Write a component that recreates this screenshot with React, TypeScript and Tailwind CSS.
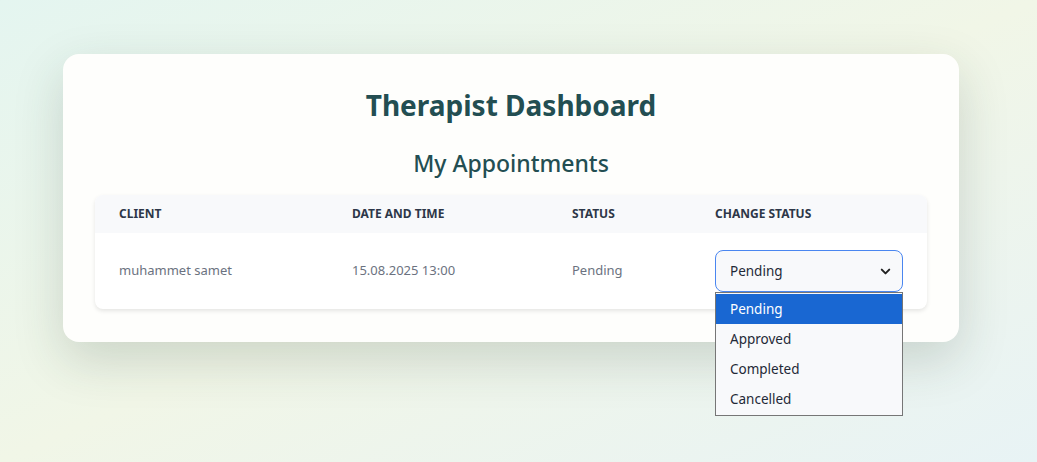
import { ChevronDown } from "lucide-react"

export default function App() {
  const options = ["Pending", "Approved", "Completed", "Cancelled"]

  return (
    <div
      className="min-h-screen w-full bg-gradient-to-br from-[#e4f5f0] via-[#f1f6e7] to-[#e8f3f5] pt-[54px] px-[63px] pb-10"
      style={{ fontFamily: '"Noto Sans", "Open Sans", sans-serif' }}
    >
      {/* Card */}
      <div className="w-[896px] bg-[#fefefc] rounded-2xl shadow-[0_18px_50px_rgba(40,60,50,0.18)] px-8 pt-[33px] pb-[33px]">
        <h1 className="text-[28px] leading-9 font-bold text-[#234e52] text-center mb-6">Therapist Dashboard</h1>
        <h2 className="text-[23px] leading-8 font-medium text-[#234e52] text-center mb-4">My Appointments</h2>

        <div className="rounded-lg bg-white shadow-[0_2px_4px_rgba(0,0,0,0.1)]">
          <div className="grid grid-cols-[233px_220px_143px_1fr] bg-[#f8f9fb] rounded-t-lg h-[38px] items-center text-[12px] font-bold uppercase text-[#2d3748]">
            <div className="pl-6">Client</div>
            <div className="pl-6">Date and Time</div>
            <div className="pl-6">Status</div>
            <div className="pl-6">Change Status</div>
          </div>
          <div className="grid grid-cols-[233px_220px_143px_1fr] h-[76px] items-center text-[13px] text-[#6b7280]">
            <div className="pl-6">muhammet samet</div>
            <div className="pl-6">15.08.2025 13:00</div>
            <div className="pl-6">Pending</div>
            <div className="pl-6 relative text-[13.5px]">
              <div className="w-[188px] h-[42px] rounded-lg border border-[#4a86f0] bg-[#f8f9fb] flex items-center justify-between pl-[14px] pr-[9px] text-[#1f2937]">
                <span>Pending</span>
                <ChevronDown size={15} strokeWidth={3.2} className="text-[#222]" />
              </div>
              {/* open options list */}
              <div className="absolute left-6 top-[42px] w-[188px] border border-[#767676] bg-[#f8f9fb] z-10 py-px">
                {options.map((o, i) => (
                  <div
                    key={o}
                    className={
                      i === 0
                        ? "h-[30px] flex items-center pl-[14px] bg-[#1967d2] text-white"
                        : "h-[30px] flex items-center pl-[14px] text-[#1f2937]"
                    }
                  >
                    {o}
                  </div>
                ))}
              </div>
            </div>
          </div>
        </div>
      </div>
    </div>
  )
}
